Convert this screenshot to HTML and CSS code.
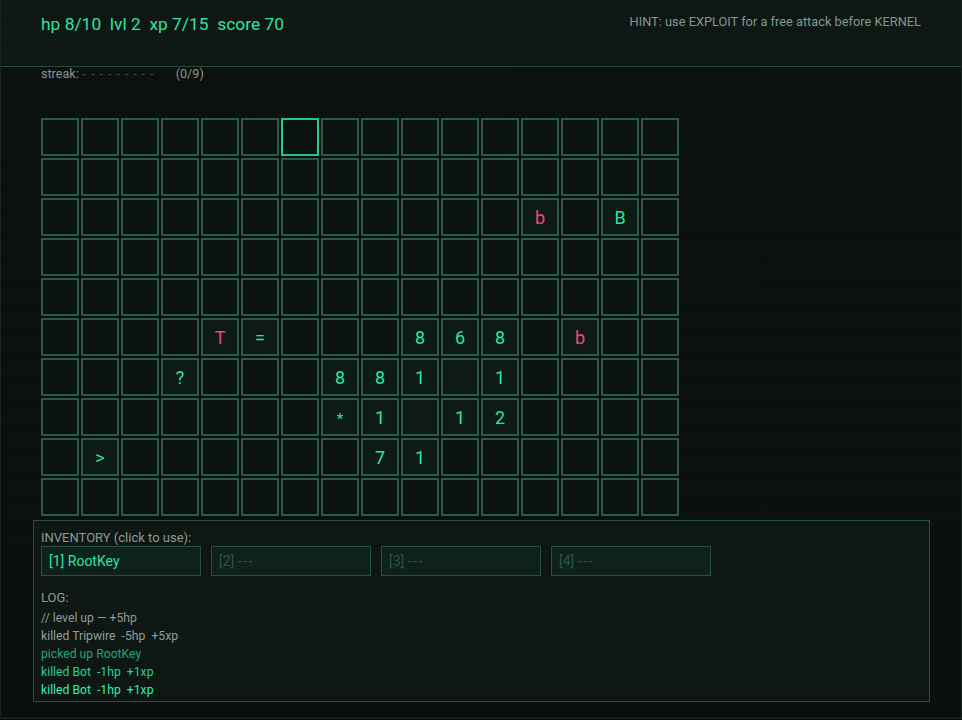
FILE: index.html
```html
<!DOCTYPE html>
<html>
<head>
<meta charset="utf-8">
<link rel="stylesheet" href="styles.css">
</head>
<body>
<div class="app">
  <header class="top">
    <div class="stats">hp 8/10  lvl 2  xp 7/15  score 70</div>
    <div class="hint">HINT: use EXPLOIT for a free attack before KERNEL</div>
  </header>
  <div class="streak"><span class="lbl">streak:</span><span class="dashes">- - - - - - - - -</span><span class="count">(0/9)</span></div>
  <div class="grid" id="grid"></div>
  <section class="panel">
    <div class="ptitle">INVENTORY (click to use):</div>
    <div class="slots">
      <div class="slot full">[1] RootKey</div>
      <div class="slot">[2] <span class="dash">---</span></div>
      <div class="slot">[3] <span class="dash">---</span></div>
      <div class="slot">[4] <span class="dash">---</span></div>
    </div>
    <div class="ptitle logt">LOG:</div>
    <div class="log">
      <div class="l grey">// level up — +5hp</div>
      <div class="l grey">killed Tripwire  -5hp  +5xp</div>
      <div class="l dim">picked up RootKey</div>
      <div class="l mid">killed Bot  -1hp  +1xp</div>
      <div class="l hi">killed Bot  -1hp  +1xp</div>
    </div>
  </section>
</div>
<script src="app.js"></script>
</body>
</html>
```
FILE: app.js
```js
(function(){
  var items = {
    "0,6":{c:"",cls:"sel"},
    "2,12":{c:"b",cls:"rev red"},
    "2,14":{c:"B",cls:"rev"},
    "5,4":{c:"T",cls:"rev red"},
    "5,5":{c:"=",cls:"rev"},
    "5,9":{c:"8",cls:"rev"},
    "5,10":{c:"6",cls:"rev"},
    "5,11":{c:"8",cls:"rev"},
    "5,13":{c:"b",cls:"rev red"},
    "6,3":{c:"?",cls:"rev"},
    "6,7":{c:"8",cls:"rev"},
    "6,8":{c:"8",cls:"rev"},
    "6,9":{c:"1",cls:"rev"},
    "6,10":{c:"",cls:"rev"},
    "6,11":{c:"1",cls:"rev"},
    "7,7":{c:"*",cls:"rev star"},
    "7,8":{c:"1",cls:"rev"},
    "7,9":{c:"",cls:"rev"},
    "7,10":{c:"1",cls:"rev"},
    "7,11":{c:"2",cls:"rev"},
    "8,1":{c:">",cls:"rev"},
    "8,8":{c:"7",cls:"rev"},
    "8,9":{c:"1",cls:"rev"}
  };
  var g = document.getElementById("grid");
  for (var r=0;r<10;r++){
    for (var c=0;c<16;c++){
      var d = document.createElement("div");
      d.className = "cell";
      var it = items[r+","+c];
      if (it){ d.className += " " + it.cls; d.textContent = it.c; }
      g.appendChild(d);
    }
  }
})();
```
FILE: styles.css
```css
html, body {
  margin: 0;
  padding: 0;
  background: #070b0a;
}
body {
  font-family: Roboto, "Noto Sans", sans-serif;
  color: #8fa39a;
}
.app {
  box-sizing: border-box;
  width: 962px;
  height: 719px;
  border-left: 1px solid #1a2420;
  border-right: 1px solid #1a2420;
  border-bottom: 1px solid #222b28;
  background:
    repeating-linear-gradient(to bottom, rgba(255,255,255,0.012) 0 1px, rgba(0,0,0,0) 1px 3px),
    linear-gradient(to bottom, #0a100e, #0a0f0e);
}
.top {
  height: 67px;
  box-sizing: border-box;
  border-bottom: 1px solid #2c4a40;
  background:
    repeating-linear-gradient(to bottom, rgba(255,255,255,0.015) 0 1px, rgba(0,0,0,0) 1px 3px),
    #0e1614;
  display: flex;
  justify-content: space-between;
  align-items: flex-start;
  padding: 13px 40px 0 40px;
}
.stats {
  white-space: pre;
  font-size: 17.4px;
  color: #2ee3a2;
  line-height: 22px;
}
.hint {
  font-size: 12.8px;
  color: #7e9a8f;
  line-height: 18px;
}
.streak {
  font-size: 12.6px;
  line-height: 14px;
  padding: 0 0 0 40px;
  height: 51px;
  display: flex;
  color: #86978f;
}
.streak .dashes {
  color: #3c4e47;
  margin-left: 4px;
  width: 93px;
  letter-spacing: 0.9px;
}
.grid {
  margin-left: 40px;
  display: grid;
  grid-template-columns: repeat(16, 38px);
  grid-auto-rows: 38px;
  gap: 2px;
}
.cell {
  box-sizing: border-box;
  border: 2px solid #2a5a45;
  background: #0a1310;
  display: flex;
  align-items: center;
  justify-content: center;
  font-size: 18px;
  color: #29e59e;
}
.cell.rev { background: #0e1a16; }
.cell.red { color: #ec4b73; }
.cell.star { font-size: 15px; padding-top: 3px; }
.cell.sel { border-color: #1fc98c; }
.panel {
  box-sizing: border-box;
  margin: 4px 0 0 32px;
  width: 897px;
  height: 182px;
  border: 1px solid #245241;
  background:
    repeating-linear-gradient(to bottom, rgba(255,255,255,0.012) 0 1px, rgba(0,0,0,0) 1px 3px),
    #0d1613;
  padding: 9px 8px 0 7px;
}
.ptitle {
  font-size: 13px;
  line-height: 15px;
  color: #8b9d96;
}
.slots {
  display: flex;
  gap: 10px;
  margin-top: 1px;
}
.slot {
  box-sizing: border-box;
  width: 160px;
  height: 30px;
  border: 1px solid #24503f;
  background: #0f211c;
  font-size: 14px;
  line-height: 28px;
  padding-left: 7px;
  color: #2a5648;
}
.slot .dash { letter-spacing: 1.5px; }
.slot.full { color: #2de3a2; }
.logt { margin-top: 14px; }
.log { margin-top: 4px; }
.l {
  white-space: pre;
  font-size: 12.2px;
  line-height: 18px;
}
.l.grey { color: #8f9c97; }
.l.dim { color: #20a676; }
.l.mid { color: #27cf90; }
.l.hi { color: #33f0aa; }
```
